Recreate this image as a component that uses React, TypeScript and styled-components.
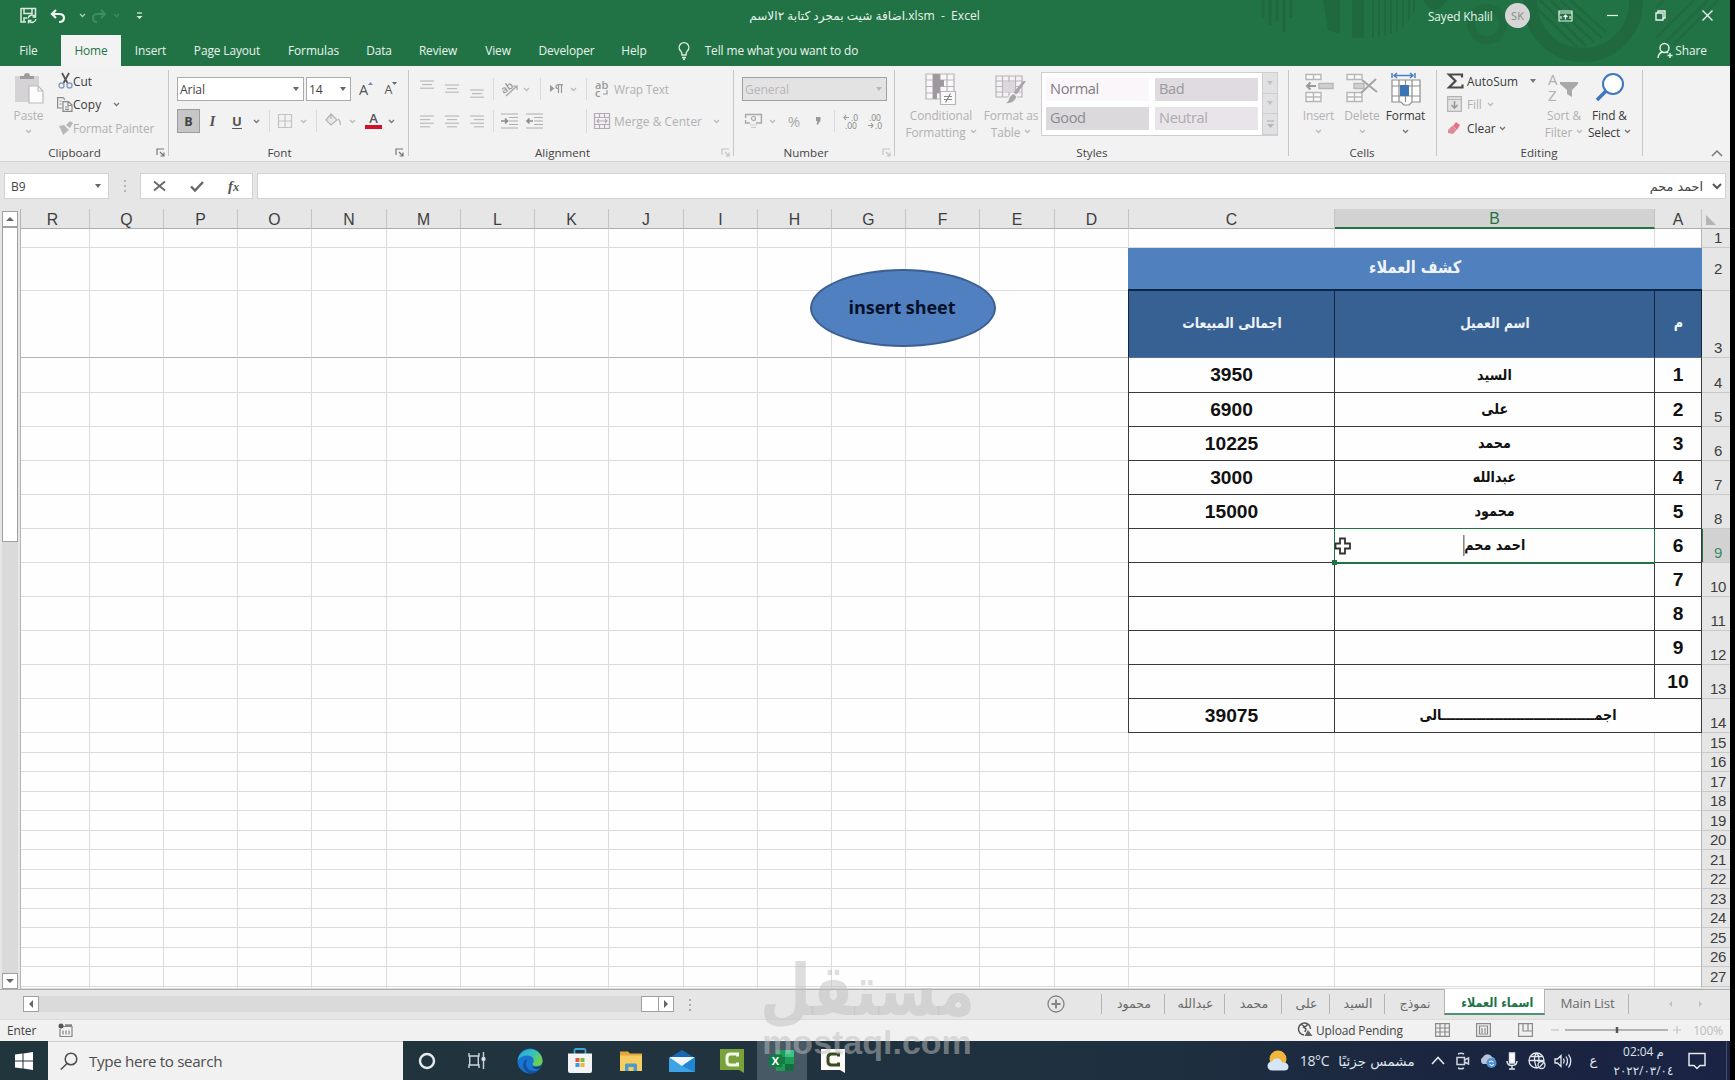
import React from 'react';
import styled, { createGlobalStyle, css } from 'styled-components';

const UI = `'Open Sans', 'Noto Sans', 'DejaVu Sans', sans-serif`;
const SHEET = `'Liberation Sans', 'DejaVu Sans', sans-serif`;
const ARABIC = `'DejaVu Sans', sans-serif`;
const GREEN = '#217346';

const Global = createGlobalStyle`
  * { box-sizing: border-box; }
  body { margin: 0; background: #000; overflow: hidden; }
  svg { overflow: visible; flex: none; }
`;

const Screen = styled.div`
  width: 1735px;
  height: 1080px;
  background: #000;
  padding-right: 5px;
  font-family: ${UI};
  font-size: 12px;
  color: #444;
  position: relative;
  overflow: hidden;
  white-space: nowrap;
`;
const Window = styled.div`
  width: 1730px;
  height: 1080px;
  display: flex;
  flex-direction: column;
  background: #e6e6e6;
`;
const Slot = styled.div<{ $w: number; $align?: string }>`
  width: ${p => p.$w}px;
  flex: none;
  display: flex;
  align-items: center;
  justify-content: ${p => p.$align || 'center'};
`;

/* ---------- title bar ---------- */
const Top = styled.header`
  height: 66px;
  flex: none;
  background: ${GREEN};
  color: #e9f3ec;
  position: relative;
  display: flex;
  flex-direction: column;
`;
const Ornament = styled.svg`
  position: absolute;
  right: 0;
  top: 0;
  overflow: hidden;
`;
const TitleRow = styled.div`
  height: 35px;
  display: flex;
  position: relative;
  padding-bottom: 4px;
`;
const Title = styled.div`
  width: 231px;
  margin-left: 593px;
  display: flex;
  align-items: center;
  justify-content: center;
  font-size: 12.1px;
  white-space: pre;
`;
const FileName = styled.span`
  font-family: ${UI};
  font-size: 12.1px;
`;
const Account = styled.div`
  width: 66px;
  margin-left: 448px;
  display: flex;
  align-items: center;
  font-size: 11.8px;
  letter-spacing: -0.1px;
`;
const Avatar = styled.div`
  width: 25px;
  height: 25px;
  margin: 3px 0 0 11px;
  border-radius: 50%;
  background: #d6d6d6;
  color: #8a8a8a;
  display: grid;
  place-items: center;
  font-size: 11px;
`;
const TabRow = styled.nav`
  height: 31px;
  display: flex;
  position: relative;
`;
const RibbonTab = styled.div<{ $w: number; $active?: boolean }>`
  width: ${p => p.$w}px;
  display: flex;
  align-items: center;
  justify-content: center;
  font-size: 11.9px;
  letter-spacing: -0.1px;
  padding-bottom: 2px;
  ${p => p.$active && css`
    background: #f3f3f3;
    color: ${GREEN};
  `}
`;

/* ---------- ribbon ---------- */
const Ribbon = styled.section`
  height: 96px;
  flex: none;
  display: flex;
  background: #f2f2f2;
  border-bottom: 1px solid #d4d4d4;
`;
const Group = styled.div<{ $w: number }>`
  width: ${p => p.$w}px;
  flex: none;
  display: flex;
  flex-direction: column;
  background: linear-gradient(#c6c6c6, #c6c6c6) right 4px / 1px 86px no-repeat;
`;
const GroupBody = styled.div<{ $pl?: number }>`
  height: 78px;
  display: flex;
  padding-left: ${p => p.$pl || 0}px;
`;
const GroupFoot = styled.div`
  height: 17px;
  display: flex;
  align-items: center;
`;
const GroupLabel = styled.div<{ $pr?: number }>`
  flex: 1;
  text-align: center;
  font-size: 11.6px;
  line-height: 17px;
  padding-right: ${p => p.$pr || 0}px;
`;
const Stack = styled.div<{ $w?: number; $pt?: number; $gap?: number }>`
  display: flex;
  flex-direction: column;
  flex: none;
  padding-top: ${p => p.$pt || 0}px;
  gap: ${p => p.$gap || 0}px;
  ${p => p.$w && css`width: ${p.$w}px;`}
`;
const ToolRow = styled.div<{ $h?: number }>`
  height: ${p => p.$h || 24}px;
  display: flex;
  align-items: center;
`;
const ToolText = styled.span<{ $off?: boolean; $w?: number; $ls?: number }>`
  color: ${p => (p.$off ? '#b3b0b3' : '#3b3b3b')};
  font-size: 11.9px;
  letter-spacing: ${p => p.$ls ?? -0.12}px;
  ${p => p.$w && css`width: ${p.$w}px;`}
`;
const BigButton = styled.div<{ $w: number; $off?: boolean }>`
  width: ${p => p.$w}px;
  flex: none;
  display: flex;
  flex-direction: column;
  align-items: center;
  padding-top: 6px;
  color: ${p => (p.$off ? '#b3b0b3' : '#3b3b3b')};
  font-size: 11.9px;
  letter-spacing: -0.1px;
  line-height: 16px;
`;
const BigIcon = styled.div`
  height: 35px;
`;
const BigLine = styled.div`
  height: 16.5px;
  display: flex;
  align-items: center;
  gap: 4px;
`;
const Combo = styled.div<{ $w: number; $off?: boolean }>`
  width: ${p => p.$w}px;
  height: 24px;
  flex: none;
  border: 1px solid ${p => (p.$off ? '#a0a0a0' : '#ababab')};
  background: ${p => (p.$off ? '#e4e3e4' : '#fff')};
  color: ${p => (p.$off ? '#b8b6b8' : '#444')};
  display: flex;
  align-items: center;
  justify-content: space-between;
  padding: 0 4px 0 2px;
  font-size: 12.2px;
  letter-spacing: -0.15px;
`;
const BoldButton = styled.div`
  width: 23px;
  height: 24px;
  background: #c6c6c6;
  border: 1px solid #9c9c9c;
  display: grid;
  place-items: center;
  font-weight: 700;
  font-size: 12.5px;
`;
const Glyph = styled.span<{ $italic?: boolean; $under?: boolean; $size?: number; $off?: boolean }>`
  font-weight: ${p => (p.$italic || p.$under ? 700 : 400)};
  font-style: ${p => (p.$italic ? 'italic' : 'normal')};
  font-family: ${p => (p.$italic ? `'Liberation Serif', serif` : UI)};
  text-decoration: ${p => (p.$under ? 'underline' : 'none')};
  text-underline-offset: 2px;
  font-size: ${p => p.$size || 13}px;
  color: ${p => (p.$off ? '#a9a9a9' : '#555')};
`;
const VRule = styled.i<{ $h?: number }>`
  width: 1px;
  height: ${p => p.$h || 22}px;
  background: #dadada;
`;
const Gallery = styled.div`
  width: 237px;
  height: 64px;
  margin-top: 6px;
  border: 1px solid #cfcdd0;
  background: #fff;
  display: flex;
`;
const GalleryGrid = styled.div`
  width: 220px;
  padding: 5px 0 0 4px;
  display: grid;
  grid-template-columns: 103px 103px;
  grid-auto-rows: 23px;
  gap: 6px 6px;
`;
const StyleCell = styled.div<{ $bg: string; $fg: string }>`
  background: ${p => p.$bg};
  color: ${p => p.$fg};
  font-size: 14.6px;
  letter-spacing: -0.35px;
  line-height: 20px;
  padding-left: 4px;
`;
const GalleryScroll = styled.div`
  flex: 1;
  display: grid;
  grid-template-rows: repeat(3, 1fr);
  > div {
    background: #e1e0e2;
    border-left: 1px solid #cfcdd0;
    border-bottom: 1px solid #cfcdd0;
    display: grid;
    place-items: center;
  }
`;
const RibbonEnd = styled.div`
  flex: 1;
  display: flex;
  justify-content: flex-end;
  align-items: flex-end;
  padding: 0 7px 4px 0;
`;

/* ---------- formula bar ---------- */
const FormulaBar = styled.div`
  height: 47px;
  flex: none;
  display: flex;
  padding: 11px 4px 10px 4px;
  background: #e6e6e6;
`;
const Box = styled.div<{ $w?: number; $ml?: number; $pl?: number }>`
  ${p => (p.$w ? css`width: ${p.$w}px; flex: none;` : css`flex: 1;`)}
  margin-left: ${p => p.$ml || 0}px;
  padding-left: ${p => p.$pl || 0}px;
  background: #fff;
  border: 1px solid #d2d2d2;
  display: flex;
  align-items: center;
  font-size: 12px;
`;
const FormulaText = styled.span`
  margin-left: auto;
  margin-right: 10px;
  font-family: ${ARABIC};
  font-size: 12.8px;
`;

/* ---------- sheet ---------- */
const SheetArea = styled.div`
  height: 781px;
  flex: none;
  display: flex;
  border-bottom: 1px solid #adadad;
`;
const VScroll = styled.div`
  width: 21px;
  flex: none;
  padding: 2px 0 0 2px;
  border-right: 1px solid #b5b5b5;
  display: flex;
  flex-direction: column;
`;
const ScrollButton = styled.div`
  width: 16px;
  height: 16px;
  flex: none;
  background: #fff;
  border: 1px solid #a0a0a0;
  display: grid;
  place-items: center;
`;
const VThumb = styled.div`
  width: 16px;
  height: 315px;
  background: #fff;
  border: 1px solid #a0a0a0;
`;
const VTrack = styled.div`
  width: 16px;
  flex: 1;
  background: #dadada;
`;

const COLS: [string, number][] = [
  ['R', 69], ['Q', 74], ['P', 74], ['O', 74], ['N', 75], ['M', 74], ['L', 74], ['K', 74], ['J', 75],
  ['I', 74], ['H', 74], ['G', 74], ['F', 74], ['E', 75], ['D', 74], ['C', 206], ['B', 320], ['A', 47],
];
const ROWS = [19, 43, 67, 35, 34, 34, 34, 34, 34, 34, 34, 34, 34, 34, 20, 19, 20, 19, 20, 19, 20, 19, 20, 19, 20, 19, 20];

const SheetGrid = styled.div`
  width: 1709px;
  display: grid;
  position: relative;
  grid-template-columns: ${COLS.map(c => c[1] + 'px').join(' ')} 28px;
  grid-template-rows: 20px ${ROWS.map(r => r + 'px').join(' ')} 1fr;
  font-family: ${SHEET};
`;
const ColHead = styled.div<{ $sel?: boolean; $clipped?: boolean }>`
  border-right: 1px solid #c3c3c3;
  border-bottom: ${p => (p.$sel ? `2px solid ${GREEN}` : '1px solid #adadad')};
  background: ${p => (p.$sel ? '#d2d2d2' : '#e6e6e6')};
  color: ${p => (p.$sel ? GREEN : '#3d3d3d')};
  display: flex;
  align-items: center;
  justify-content: center;
  font-size: 15.8px;
  line-height: 18px;
  padding: 2px ${p => (p.$clipped ? 5 : 0)}px 0 0;
`;
const Corner = styled.div`
  border-bottom: 1px solid #adadad;
  display: flex;
  align-items: flex-end;
  padding: 0 0 3px 4px;
`;
const RowHead = styled.div<{ $sel?: boolean; $mid?: boolean }>`
  grid-column: 19;
  border-bottom: 1px solid #c9c9c9;
  border-left: ${p => (p.$sel ? `2px solid ${GREEN}` : '1px solid #b5b5b5')};
  margin-left: -1px;
  background: ${p => (p.$sel ? '#d2d2d2' : '#e6e6e6')};
  color: ${p => (p.$sel ? '#3a8a62' : '#3d3d3d')};
  display: flex;
  align-items: ${p => (p.$mid ? 'center' : 'flex-end')};
  justify-content: center;
  padding: 0 0 0 ${p => (p.$sel ? 3 : 4)}px;
  font-size: 15px;
  line-height: 18px;
  letter-spacing: -0.3px;
`;
const Empty = styled.div<{ $freeze?: boolean }>`
  background: #fefefe;
  border-right: 1px solid #dcdcdc;
  border-bottom: 1px solid ${p => (p.$freeze ? '#b4b4b4' : '#dcdcdc')};
`;
const Cell = styled.div<{ $kind?: 'title' | 'head' | 'body'; $first?: boolean; $ar?: boolean }>`
  display: flex;
  align-items: center;
  justify-content: center;
  font-weight: 700;
  font-size: ${p => (p.$ar ? 15 : 19.2)}px;
  font-family: ${p => (p.$ar ? ARABIC : SHEET)};
  color: #111;
  background: #fefefe;
  border-right: 1px solid #3a3a3a;
  border-bottom: 1px solid #3a3a3a;
  ${p => p.$ar && css`padding-bottom: 1px;`}
  ${p => p.$first && css`
    border-left: 1px solid #3a3a3a;
    margin-left: -1px;
  `}
  ${p => p.$kind === 'title' && css`
    background: #5080bd;
    color: #eef3fa;
    border: 0;
    border-bottom: 2px solid #0d2747;
    font-size: 17px;
    padding-bottom: 4px;
  `}
  ${p => p.$kind === 'head' && css`
    background: #376193;
    color: #eef3fa;
    border-color: #16273d;
    border-bottom-color: #50709a;
    padding-bottom: 3px;
  `}
`;
const Narrow = styled.span<{ $x?: number }>`
  display: inline-flex;
  align-items: center;
  transform: scaleX(${p => p.$x || 0.85});
`;
const Selection = styled.div`
  grid-column: 17;
  grid-row: 10;
  margin: -1px 0 -1px -1px;
  border: 1px solid ${GREEN};
  border-bottom-width: 2px;
  z-index: 2;
  position: relative;
`;
const FillHandle = styled.i`
  position: absolute;
  left: -3px;
  bottom: -3px;
  width: 5px;
  height: 5px;
  background: ${GREEN};
`;
const Pointer = styled.svg`
  position: absolute;
  left: -1px;
  top: 8px;
`;
const Caret = styled.i`
  width: 1px;
  height: 21px;
  background: #222;
`;
const OvalButton = styled.div`
  position: absolute;
  left: 789px;
  top: 60px;
  width: 186px;
  height: 78px;
  border-radius: 50%;
  background: #5080bf;
  border: 2px solid #3b5f90;
  color: #04102a;
  font-family: 'Open Sans', sans-serif;
  font-weight: 700;
  font-size: 18px;
  letter-spacing: -0.05px;
  display: flex;
  align-items: center;
  justify-content: center;
  padding: 0 2px 3px 0;
`;

/* ---------- sheet tabs ---------- */
const TabsBar = styled.div`
  height: 29px;
  flex: none;
  display: flex;
  padding-left: 23px;
  background: #e6e6e6;
`;
const HScroll = styled.div`
  width: 651px;
  display: flex;
  padding-top: 6px;
`;
const HTrack = styled.div`
  flex: 1;
  height: 16px;
  background: #dadada;
`;
const HThumb = styled(ScrollButton)`
  width: 18px;
  margin-right: -1px;
`;
const Plus = styled.div`
  width: 54px;
  margin-left: 341px;
  padding-top: 5px;
`;
const SheetTab = styled.div<{ $w: number; $active?: boolean; $latin?: boolean; $plain?: boolean }>`
  width: ${p => p.$w}px;
  flex: none;
  display: flex;
  align-items: center;
  justify-content: center;
  font-family: ${p => (p.$latin ? UI : ARABIC)};
  font-size: ${p => (p.$latin ? 13.4 : 12.5)}px;
  letter-spacing: ${p => (p.$latin ? -0.25 : 0)}px;
  padding: 0 0 ${p => (p.$latin ? 4 : 2)}px 1px;
  color: #6a6a6a;
  background: ${p => (p.$plain ? 'none' : 'linear-gradient(#b4b4b4, #b4b4b4) right 4px / 1px 20px no-repeat')};
  ${p => p.$active && css`
    background: #fff;
    color: ${GREEN};
    font-weight: 700;
    font-size: 12.8px;
    height: 26px;
    margin-top: -1px;
    padding: 3px 0 0 6px;
    border: 1px solid #b4b4b4;
    border-top: 0;
    border-bottom: 2px solid #4c9371;
  `}
`;
const TabNav = styled.div`
  margin-left: 39px;
  display: flex;
  gap: 25px;
  padding-top: 10px;
`;

/* ---------- status bar ---------- */
const Status = styled.div`
  height: 22px;
  flex: none;
  display: flex;
  align-items: center;
  padding: 0 6px 2px 7px;
  background: #f1f1f1;
  border-top: 1px solid #dcdcdc;
  font-size: 11.9px;
  letter-spacing: -0.1px;
`;
const Faded = styled.span`
  color: #bcbcbc;
`;

/* ---------- task bar ---------- */
const Taskbar = styled.footer`
  flex: 1;
  display: flex;
  background: linear-gradient(90deg, #21353d 0%, #20333f 45%, #1e2f3f 68%, #1a2540 85%, #1a2344 100%);
  color: #dfe4ea;
`;
const Search = styled.div`
  width: 355px;
  height: 39px;
  background: #f1f1f1;
  border-top: 1px solid #cfcfcf;
  display: flex;
  align-items: center;
  gap: 11px;
  padding-left: 12px;
  color: #4d4d4d;
  font-size: 15.2px;
  letter-spacing: -0.35px;
`;
const TaskItem = styled.div<{ $w: number; $on?: boolean }>`
  width: ${p => p.$w}px;
  display: flex;
  align-items: center;
  justify-content: center;
  background: ${p => (p.$on ? '#465964' : 'transparent')};
`;
const Tray = styled.div`
  margin-left: auto;
  display: flex;
`;
const TrayText = styled.div<{ $w: number; $size?: number; $ar?: boolean; $pl?: number }>`
  width: ${p => p.$w}px;
  padding: 0 0 0 ${p => p.$pl || 0}px;
  display: flex;
  align-items: center;
  justify-content: center;
  font-size: ${p => p.$size || 14}px;
  font-family: ${p => (p.$ar ? ARABIC : UI)};
  letter-spacing: ${p => (p.$ar ? 0 : -0.3)}px;
`;
const Clock = styled.div`
  width: 66px;
  display: flex;
  flex-direction: column;
  align-items: center;
  justify-content: space-between;
  padding: 1px 0 0 3px;
  font-size: 11.9px;
  letter-spacing: -0.3px;
  line-height: 19px;
`;
const ShowDesktop = styled.div`
  width: 4px;
  border-left: 1px solid #46506b;
`;

/* ---------- watermark ---------- */
const Watermark = styled.div`
  position: absolute;
  left: 762px;
  top: 948px;
  width: 210px;
  color: rgba(190, 190, 190, 0.5);
  display: flex;
  flex-direction: column;
  align-items: center;
`;
const MarkArabic = styled.div`
  font-family: ${ARABIC};
  font-weight: 700;
  font-size: 56px;
  line-height: 76px;
  height: 76px;
  transform: scale(1.05, 1.28);
  transform-origin: 50% 26%;
`;
const MarkLatin = styled.div`
  font-family: 'Liberation Sans', sans-serif;
  font-weight: 700;
  font-size: 34px;
  line-height: 36px;
`;

/* ---------- icons ---------- */
type IconProps = { w: number; h?: number; c?: string; sw?: number; children: React.ReactNode };
const Svg = styled.svg`
  display: block;
`;
const Icon = ({ w, h, c = '#777', sw = 1.2, children }: IconProps) => (
  <Svg width={w} height={h || w} viewBox={`0 0 ${w} ${h || w}`} fill="none" stroke={c} strokeWidth={sw}>
    {children}
  </Svg>
);
const Chevron = ({ c = '#777' }: { c?: string }) => (
  <Icon w={7} h={5} c={c} sw={1.3}><path d="M1 1l2.5 2.5L6 1" /></Icon>
);
const Caret7 = ({ c = '#666' }: { c?: string }) => (
  <Icon w={6} h={4} c="none"><path d="M0 0h6L3 4z" fill={c} /></Icon>
);
const Launcher = ({ off, end }: { off?: boolean; end?: boolean }) => (
  <Slot $w={end ? 13 : 14} $align="flex-start">
    <Icon w={9} c={off ? '#c4c4c4' : '#777'}><path d="M1 7V1h7M4 4l4 4M8 4.5V8H4.5" /></Icon>
  </Slot>
);
const Lines = ({ kind, y = 0 }: { kind: 'left' | 'center' | 'right'; y?: number }) => {
  const long = 14, short = 10;
  const x = kind === 'left' ? 0 : kind === 'center' ? 2 : 4;
  const n = y ? 3 : 4;
  return (
    <Icon w={15} h={24} c="#b9b7b9" sw={1.1}>
      {Array.from({ length: n }, (_, i) => {
        const s = i % 2 ? short : long;
        const yy = (y || 7) + i * 3.6;
        return <path key={i} d={`M${i % 2 ? x : 0} ${yy}h${s}`} />;
      })}
    </Icon>
  );
};
const Indent = ({ out }: { out?: boolean }) => (
  <Icon w={17} h={16} c="#b0aeb0">
    <path d="M0 1h17M8 4.5h9M8 8h9M8 11.5h9M0 15h17" />
    <path d={out ? 'M1 8h6M3.5 5.500L1 8l2.500 2.500' : 'M0 8h6M4 5.500L6.500 8 4 10.500'} stroke="#8b8b8b" strokeWidth="1.6" />
  </Icon>
);
const ScrollArrow = ({ d }: { d: string }) => <Icon w={8} c="none"><path d={d} fill="#666" /></Icon>;
const Camtasia = ({ bg, fg }: { bg: string; fg: string }) => (
  <svg width="26" height="26" viewBox="0 0 26 26">
    <path d="M1 1h24v24l-5-3H1z" fill={bg} />
    <path d="M18.500 8.500V6h-7q-3.500 0-3.500 3.500v4q0 3.500 3.500 3.500h7v-2.500" fill="none" stroke={fg} strokeWidth="3" />
  </svg>
);

const NAMES = ['السيد', 'على', 'محمد', 'عبدالله', 'محمود', 'احمد محم', '', '', '', ''];
const SALES = ['3950', '6900', '10225', '3000', '15000', '', '', '', '', ''];
const TOTAL = 'اجم' + 'ـ'.repeat(35) + 'الى';

const place = (row: number, col: number, span = 1): React.CSSProperties => ({
  gridRow: row + 1,
  gridColumn: `${col} / span ${span}`,
});

const TopBar = () => (
  <Top>
    <Ornament width="490" height="66" viewBox="1240 0 490 66" fill="none" stroke="#20693f" strokeWidth="5">
      <path d="M1263 0v18M1270 0v25M1277 0v21M1284 0v32M1291 0v18" strokeWidth="3" />
      <path d="M1323 0l5 30 12 4V0zM1352 0v38h12V0zM1423 0q12 20 24 0z" fill="#20693f" stroke="none" />
      <path d="M1373 0v38M1379 0v37M1385 0v36M1391 0v34M1397 0v31M1403 0v27M1409 0v20M1414 0v12" strokeWidth="2" />
      <circle cx="1487" cy="24" r="16" strokeWidth="8" opacity=".8" />
      <circle cx="1583" cy="2" r="53" strokeWidth="14" />
      <path d="M1540 0l46 46M1550 0l44 42M1560 0l42 38M1570 0l36 32M1532 4l46 44" strokeWidth="2.500" />
      <path d="M1665 43l43-43M1674 44l44-44M1656 38l38-38M1656 8l8-8" strokeWidth="3" opacity=".8" />
    </Ornament>
    <TitleRow>
      <Slot $w={20} />
      <Slot $w={17}>
        <Icon w={17} c="#dcebe1" sw={1.5}><path d="M1 1.500h14.500v6M1 1v14h5M4 2v4.500h8V2M4 15v-4h3" /><path d="M8 11.500a4 4 0 0 1 7-2M16 12a4 4 0 0 1-7 2M15.500 7v3h-3M8.500 16.500v-3h3" strokeWidth="1.400" /></Icon>
      </Slot>
      <Slot $w={42}><Icon w={16} h={14} c="#f2f8f4" sw={2.2}><path d="M6 1L2 5l4 4M2 5h7q5 0 5 4t-5 4" /></Icon></Slot>
      <Slot $w={8} $align="flex-start"><Chevron c="#a9cdb7" /></Slot>
      <Slot $w={23}><Icon w={16} h={14} c="#418c60" sw={2}><path d="M10 1l4 4-4 4M14 5H7q-5 0-5 4t4 4" /></Icon></Slot>
      <Slot $w={12}><Chevron c="#418c60" /></Slot>
      <Slot $w={34}><Icon w={7} h={8} c="#dcebe1"><path d="M1 1h5" /><path d="M.5 4h6L3.500 7z" fill="#dcebe1" stroke="none" /></Icon></Slot>
      <Title><FileName>اضافة شيت بمجرد كتابة ٢الاسم.xlsm</FileName>{'  -  Excel'}</Title>
      <Account>Sayed Khalil</Account>
      <Avatar>SK</Avatar>
      <Slot $w={70}><Icon w={15} h={12} c="#e9f3ec"><path d="M1 1h13v10H1zM1 3h13M7.500 9.500V5M5.500 7l2-2 2 2M3 6v3M12 6v3" /></Icon></Slot>
      <Slot $w={25}><Icon w={11} h={3} c="#e9f3ec"><path d="M0 1.500h11" /></Icon></Slot>
      <Slot $w={70}><Icon w={11} c="#e9f3ec" sw={1.4}><path d="M1 3h7v7H1zM3 3V1h7v7H8" /></Icon></Slot>
      <Slot $w={25}><Icon w={11} c="#e9f3ec" sw={1.4}><path d="M.500.500l10 10M10.500.500l-10 10" /></Icon></Slot>
    </TitleRow>
    <TabRow>
      <RibbonTab $w={57}>File</RibbonTab>
      <Slot $w={4} />
      <RibbonTab $w={60} $active>Home</RibbonTab>
      <RibbonTab $w={59}>Insert</RibbonTab>
      <RibbonTab $w={94}>Page Layout</RibbonTab>
      <RibbonTab $w={79}>Formulas</RibbonTab>
      <RibbonTab $w={52}>Data</RibbonTab>
      <RibbonTab $w={66}>Review</RibbonTab>
      <RibbonTab $w={54}>View</RibbonTab>
      <RibbonTab $w={83}>Developer</RibbonTab>
      <RibbonTab $w={52}>Help</RibbonTab>
      <Slot $w={48}><Icon w={12} h={18} c="#dcebe1" sw={1.4}><path d="M4 13q0-3-1.500-4.200A4.800 4.800 0 1 1 9.500 8.800Q8 10 8 13zM4 15.500h4M5 17.300h2" /></Icon></Slot>
      <RibbonTab $w={147}>Tell me what you want to do</RibbonTab>
      <Slot $w={794} />
      <Slot $w={32}><Icon w={16} h={17} c="#e9f3ec" sw={1.4}><circle cx="7.500" cy="6" r="4.500" /><path d="M1 16q.5-5 4.500-6M9.500 10q1 .5 1.500 1M13 11v5M10.500 13.500h5" /></Icon></Slot>
      <RibbonTab $w={20}>Share</RibbonTab>
    </TabRow>
  </Top>
);

const MainRibbon = () => (
  <Ribbon>
    <Group $w={169}>
      <GroupBody>
        <BigButton $w={57} $off>
          <BigIcon>
            <Icon w={30} h={32} c="none"><path d="M1 4h24v26H1z" fill="#d5d3d6" /><path d="M6 7V4h4q0-3 3-3t3 3h4v3z" fill="#9e9ca0" /><path d="M15 14h9l5 5v12H15z" fill="#fcfcfc" stroke="#bbb" /><path d="M24 14v5h5" stroke="#bbb" /></Icon>
          </BigIcon>
          <BigLine>Paste</BigLine>
          <BigLine><Chevron c="#bbb" /></BigLine>
        </BigButton>
        <Stack $pt={3}>
          <ToolRow $h={23}>
            <Slot $w={16}><Icon w={15} h={16} c="#555" sw={1.800}><path d="M4 0l5.500 10M11 0L5.500 10" /><circle cx="3.500" cy="12.500" r="2.500" stroke="#8a9cc0" strokeWidth="1.400" /><circle cx="11.500" cy="12.500" r="2.500" stroke="#8a9cc0" strokeWidth="1.400" /></Icon></Slot>
            <ToolText $ls={0}>Cut</ToolText>
          </ToolRow>
          <ToolRow $h={24}>
            <Slot $w={16}><Icon w={16} h={15} c="#888"><path d="M5 11H.6V.600h5.400l2 2M6 4.600h5.500l3.500 3.500v6.300H6zM11 5v3.500h4M8 10h4M8 12.400h4M2.500 4h2M2.500 7h2" /></Icon></Slot>
            <ToolText $w={40} $ls={0.1}>Copy</ToolText>
            <Chevron />
          </ToolRow>
          <ToolRow $h={23}>
            <Slot $w={16}><Icon w={15} h={14} c="none"><path d="M8 4l4-4 3 2-3 5zM1 5l5-1 5 5-6 5-1-3z" fill="#b9b7b9" /></Icon></Slot>
            <ToolText $off>Format Painter</ToolText>
          </ToolRow>
        </Stack>
      </GroupBody>
      <GroupFoot><GroupLabel $pr={7}>Clipboard</GroupLabel><Launcher end /></GroupFoot>
    </Group>

    <Group $w={240}>
      <GroupBody $pl={8}>
        <Stack $pt={11} $gap={8}>
          <ToolRow>
            <Combo $w={127}>Arial<Caret7 /></Combo>
            <Slot $w={2} />
            <Combo $w={45}>14<Caret7 /></Combo>
            <Slot $w={30}><Glyph $size={14.5}>A</Glyph><Icon w={5} h={12} c="none"><path d="M0 2h5L2.500 -1z" fill="#6f8cc0" /></Icon></Slot>
            <Slot $w={20}><Glyph $size={12.5}>A</Glyph><Icon w={5} h={14} c="none"><path d="M0 0h5L2.500 3z" fill="#666" /></Icon></Slot>
          </ToolRow>
          <ToolRow>
            <BoldButton>B</BoldButton>
            <Slot $w={25}><Glyph $italic $size={15}>I</Glyph></Slot>
            <Slot $w={24}><Glyph $under>U</Glyph></Slot>
            <Slot $w={14}><Chevron /></Slot>
            <Slot $w={13}><VRule /></Slot>
            <Slot $w={18}><Icon w={14} c="#c3c1c3"><path d="M.5.500h13v13H.500zM7 0v14M0 7h14" /></Icon></Slot>
            <Slot $w={19}><Chevron c="#bbb" /></Slot>
            <Slot $w={7}><VRule /></Slot>
            <Slot $w={26}><Icon w={18} h={16} c="#b5b3b5"><path d="M7 1l6 6-6 5-5-5zM7 1v5" fill="#e9e8e9" /><path d="M14 6q3 2 2 6" /></Icon></Slot>
            <Slot $w={12}><Chevron c="#bbb" /></Slot>
            <Slot $w={30}>
              <Icon w={17} h={18} c="none"><text x="8.500" y="11" textAnchor="middle" fontSize="13" fontWeight="600" fill="#555">A</text><path d="M0 13h17v4H0z" fill="#d0112b" /></Icon>
            </Slot>
            <Slot $w={6}><Chevron /></Slot>
          </ToolRow>
        </Stack>
      </GroupBody>
      <GroupFoot><GroupLabel $pr={5}>Font</GroupLabel><Launcher /></GroupFoot>
    </Group>

    <Group $w={325}>
      <GroupBody $pl={6}>
        <Stack $pt={11} $gap={8}>
          <ToolRow>
            <Slot $w={25}><Lines kind="center" y={4} /></Slot>
            <Slot $w={25}><Lines kind="center" y={8} /></Slot>
            <Slot $w={25}><Lines kind="center" y={13} /></Slot>
            <Slot $w={7}><VRule /></Slot>
            <Slot $w={25}><Icon w={18} h={16} c="#a3a3a3"><text x="1" y="10" fontSize="10.500" fontWeight="600" fill="#9a9a9a" stroke="none" transform="rotate(-35 7 9)">ab</text><path d="M5 15L16 5M12 5h4v4" /></Icon></Slot>
            <Slot $w={9}><Chevron c="#bbb" /></Slot>
            <Slot $w={18}><VRule /></Slot>
            <Slot $w={14}><Icon w={13} h={10} c="#999"><path d="M0 1l4.500 3.500L0 8z" fill="#999" stroke="none" /><path d="M8.500 0v9M11.500 0v9M13 .6H8a2 2 0 0 0 0 4" /></Icon></Slot>
            <Slot $w={20}><Chevron c="#bbb" /></Slot>
            <Slot $w={7}><VRule /></Slot>
            <Slot $w={24}><Icon w={14} h={17} c="none"><text x="0" y="8" fontSize="11" fontWeight="600" fill="#999">ab</text><text x="0" y="16" fontSize="11" fontWeight="600" fill="#999">c</text><path d="M12 9v4H8" stroke="#999" /></Icon></Slot>
            <ToolText $off $ls={-0.2}>Wrap Text</ToolText>
          </ToolRow>
          <ToolRow>
            <Slot $w={25}><Lines kind="left" /></Slot>
            <Slot $w={25}><Lines kind="center" /></Slot>
            <Slot $w={25}><Lines kind="right" /></Slot>
            <Slot $w={7}><VRule /></Slot>
            <Slot $w={24}><Indent /></Slot>
            <Slot $w={26}><Indent out /></Slot>
            <Slot $w={36} />
            <Slot $w={7}><VRule $h={24} /></Slot>
            <Slot $w={24}><Icon w={16} c="#b5a9b8"><path d="M.5.500h15v15H.500zM0 4.500h16M0 11.500h16M5.500 0v4.500M10.500 0v4.500M5.500 11.500V16M10.500 11.500V16M3 8h10M5 6L3 8l2 2M11 6l2 2-2 2" /></Icon></Slot>
            <ToolText $off $w={99} $ls={0.04}>Merge &amp; Center</ToolText>
            <Chevron c="#bbb" />
          </ToolRow>
        </Stack>
      </GroupBody>
      <GroupFoot><GroupLabel $pr={5}>Alignment</GroupLabel><Launcher off end /></GroupFoot>
    </Group>

    <Group $w={161}>
      <GroupBody $pl={8}>
        <Stack $pt={11} $gap={8}>
          <ToolRow><Combo $w={145} $off>General<Caret7 c="#b9b9b9" /></Combo></ToolRow>
          <ToolRow>
            <Slot $w={23}><Icon w={17} h={16} c="#a9a9a9"><path d="M.6 5V1.600h15.800V10H11M.6 7v3H5" strokeWidth="1.500" /><circle cx="8.500" cy="5.500" r="2" /><path d="M5 12h7M6 14.500h5" stroke="#ccc" /></Icon></Slot>
            <Slot $w={15}><Chevron c="#bbb" /></Slot>
            <Slot $w={28}><Glyph $off $size={15}>%</Glyph></Slot>
            <Slot $w={20}><Icon w={5} h={8} c="none"><path d="M0 0h4.500v3.500L2 7.500H.500L1.500 4H0z" fill="#999" /></Icon></Slot>
            <Slot $w={13}><VRule /></Slot>
            <Slot $w={19}><Icon w={16} h={15} c="#999"><path d="M6 3.500H1M3 1L1 3.500 3 6" /><text x="8" y="7" fontSize="8.500" fill="#858585" stroke="none">.0</text><text x="2" y="15" fontSize="8.500" fill="#858585" stroke="none">.00</text></Icon></Slot>
            <Slot $w={29}><Icon w={16} h={15} c="#999"><path d="M1 11.500h5M4 9l2 2.500L4 14" /><text x="2" y="7" fontSize="8.500" fill="#858585" stroke="none">.00</text><text x="8" y="15" fontSize="8.500" fill="#858585" stroke="none">.0</text></Icon></Slot>
          </ToolRow>
        </Stack>
      </GroupBody>
      <GroupFoot><GroupLabel $pr={4}>Number</GroupLabel><Launcher off end /></GroupFoot>
    </Group>

    <Group $w={394}>
      <GroupBody $pl={6}>
        <BigButton $w={80} $off>
          <BigIcon>
            <Icon w={32} h={33} c="#b7b3b8"><path d="M1 2h28v25H1zM1 8h28M1 14.500h28M1 21h28M8 2v25M22 2v25M15 2v25" fill="#faf8fa" /><path d="M8 2h7v6h4v6.500h-4V21h-3v6H8z" fill="#9d999e" stroke="none" /><path d="M15.500 19.500h15v13h-15z" fill="#fbfafb" /><path d="M19 24.500h8M19 27.500h8M25.500 21.500l-5 9" stroke="#888" /></Icon>
          </BigIcon>
          <BigLine>Conditional</BigLine>
          <BigLine>Formatting <Chevron c="#bbb" /></BigLine>
        </BigButton>
        <BigButton $w={60} $off>
          <BigIcon>
            <Icon w={32} h={33} c="#b7b3b8"><path d="M1 4h26v21H1zM1 9h26M1 14.500h26M1 20h26M7.500 4v21M14 4v21M20.500 4v21" fill="#f5f2f5" /><path d="M8 10h12v10H8z" fill="#dbd7dc" stroke="none" /><path d="M31 9l-9 13-4-1 10-12z" fill="#a9a6aa" stroke="none" /><path d="M18 21l4 3q-1 8-13 8 5-3 5-7z" fill="#a9a6aa" stroke="#f2f2f2" /></Icon>
          </BigIcon>
          <BigLine>Format as</BigLine>
          <BigLine>Table <Chevron c="#bbb" /></BigLine>
        </BigButton>
        <Gallery>
          <GalleryGrid>
            <StyleCell $bg="#faf6fa" $fg="#7f7c80">Normal</StyleCell>
            <StyleCell $bg="#dfdbe0" $fg="#9b979c">Bad</StyleCell>
            <StyleCell $bg="#dcd9dd" $fg="#8e8b90">Good</StyleCell>
            <StyleCell $bg="#e8e4e9" $fg="#aeaab0">Neutral</StyleCell>
          </GalleryGrid>
          <GalleryScroll>
            <div><Caret7 c="#c2c0c3" /></div>
            <div><Caret7 c="#c2c0c3" /></div>
            <div><Icon w={7} h={8} c="#b5b3b6"><path d="M0 1h7" /><path d="M0 4h7L3.500 8z" fill="#b5b3b6" stroke="none" /></Icon></div>
          </GalleryScroll>
        </Gallery>
      </GroupBody>
      <GroupFoot><GroupLabel>Styles</GroupLabel></GroupFoot>
    </Group>

    <Group $w={148}>
      <GroupBody $pl={8}>
        <BigButton $w={43} $off>
          <BigIcon><Icon w={30} h={32} c="#b7b7b7" sw={1.400}><path d="M2 2.500h15v5H2zM9.500 2.500v5M2 20.500h15v9H2zM9.500 20.500v9M2 25h15" fill="#fafafa" /><path d="M15 11.500h14v5H15z" fill="#d0d0d0" /><path d="M12 14H3M6.500 10.500L3 14l3.500 3.500" stroke="#999" strokeWidth="2" /></Icon></BigIcon>
          <BigLine>Insert</BigLine>
          <BigLine><Chevron c="#bbb" /></BigLine>
        </BigButton>
        <BigButton $w={44} $off>
          <BigIcon><Icon w={32} h={32} c="#b7b7b7" sw={1.400}><path d="M1 2.500h15v5H1zM8.500 2.500v5M1 20.500h15v9H1zM8.500 20.500v9M1 25h15" fill="#fafafa" /><path d="M8 11.500h10v5H8z" fill="#d0d0d0" /><path d="M16 8l15 12M30 7L15 21" stroke="#a5a5a5" strokeWidth="2" /></Icon></BigIcon>
          <BigLine>Delete</BigLine>
          <BigLine><Chevron c="#bbb" /></BigLine>
        </BigButton>
        <BigButton $w={43}>
          <BigIcon><Icon w={30} h={34} c="#8d8d8d"><path d="M1 8h28v22h-8l-3 3h-5l-3-3H1zM1 14h28M1 24h28M8 8v22M21 8v22M14.500 8v6M14.500 24v6" fill="#fff" /><path d="M9 13h9v11H9z" fill="#3b73b5" stroke="none" /><path d="M1 1v5M24 1v5M3 3.500h19M6 1L3 3.500 6 6M19 1l3 2.500L19 6" stroke="#4a7fc0" strokeWidth="1.500" /></Icon></BigIcon>
          <BigLine>Format</BigLine>
          <BigLine><Chevron /></BigLine>
        </BigButton>
      </GroupBody>
      <GroupFoot><GroupLabel $pr={2}>Cells</GroupLabel></GroupFoot>
    </Group>

    <Group $w={206}>
      <GroupBody $pl={10}>
        <Stack $w={92} $pt={3}>
          <ToolRow $h={23}>
            <Slot $w={20} $align="flex-start"><Icon w={17} h={16} c="#4a4a4a" sw={2.200}><path d="M15 4.500V1.500H2L8.500 8 2 14.500h13.500v-3" /></Icon></Slot>
            <ToolText $w={63} $ls={0}>AutoSum</ToolText>
            <Caret7 c="#777" />
          </ToolRow>
          <ToolRow $h={24}>
            <Slot $w={20} $align="flex-start"><Icon w={15} h={16} c="#b5b5b5"><path d="M.6.600h13.800v14.800H.600zM0 3.500h15" fill="#e3e3e3" /><path d="M7.500 5v7M4.500 9l3 3 3-3" stroke="#999" strokeWidth="1.600" /></Icon></Slot>
            <ToolText $off $w={20}>Fill</ToolText>
            <Chevron c="#bbb" />
          </ToolRow>
          <ToolRow $h={24}>
            <Slot $w={20} $align="flex-start"><Icon w={14} h={14} c="none"><path d="M9 1l4 3-3 5-4-4z" fill="#e8718a" /><path d="M5.500 4.500l4 4.500-3.500 4-5-1 0-3z" fill="#dd8a9b" /></Icon></Slot>
            <ToolText $w={32} $ls={0}>Clear</ToolText>
            <Chevron />
          </ToolRow>
        </Stack>
        <BigButton $w={50} $off>
          <BigIcon><Icon w={32} h={32} c="none"><text x="0" y="13" fontSize="15" fill="#b0b0b0">A</text><text x="0" y="29" fontSize="15" fill="#b0b0b0">Z</text><path d="M12 10h18v2l-6 6v7l-5-3v-4l-7-6z" fill="#a9a9a9" /></Icon></BigIcon>
          <BigLine>Sort &amp;</BigLine>
          <BigLine>Filter <Chevron c="#bbb" /></BigLine>
        </BigButton>
        <BigButton $w={41}>
          <BigIcon><Icon w={30} h={32} c="#3d77bd" sw={2}><circle cx="18" cy="12" r="10" fill="#fff" /><path d="M11 19L2 28" strokeWidth="3.600" /></Icon></BigIcon>
          <BigLine>Find &amp;</BigLine>
          <BigLine>Select <Chevron /></BigLine>
        </BigButton>
      </GroupBody>
      <GroupFoot><GroupLabel $pr={2}>Editing</GroupLabel></GroupFoot>
    </Group>
    <RibbonEnd><Icon w={12} h={7} c="#777" sw={1.500}><path d="M1 6l5-5 5 5" /></Icon></RibbonEnd>
  </Ribbon>
);

const Sheet = () => (
  <SheetArea>
    <VScroll>
      <ScrollButton><ScrollArrow d="M0 6l4-4 4 4z" /></ScrollButton>
      <VThumb />
      <VTrack />
      <ScrollButton><ScrollArrow d="M0 2l4 4 4-4z" /></ScrollButton>
    </VScroll>
    <SheetGrid>
      {COLS.map(([name], i) => <ColHead key={name} $sel={name === 'B'} $clipped={name === 'R'} style={place(0, i + 1)}>{name}</ColHead>)}
      <Corner style={place(0, 19)}><Icon w={10} c="none"><path d="M0 0v10h10z" fill="#b4b4b4" /></Icon></Corner>
      {ROWS.map((_, r) => {
        const row = r + 1;
        const inTable = row >= 2 && row <= 14;
        return COLS.slice(0, inTable ? 15 : 18).map(([name], c) => (
          <Empty key={name + row} $freeze={row === 3} style={place(row, c + 1)} />
        ));
      })}
      {COLS.map(([name], c) => <Empty key={'end' + name} style={place(28, c + 1)} />)}
      {ROWS.map((_, r) => <RowHead key={r} $sel={r === 8} $mid={r === 1} style={{ gridRow: r + 2 }}>{r + 1}</RowHead>)}

      <Cell $kind="title" $ar $first style={place(2, 16, 3)}><Narrow>كشف العملاء</Narrow></Cell>
      <Cell $kind="head" $ar $first style={place(3, 16)}><Narrow $x={0.83}>اجمالى المبيعات</Narrow></Cell>
      <Cell $kind="head" $ar style={place(3, 17)}><Narrow $x={0.81}>اسم العميل</Narrow></Cell>
      <Cell $kind="head" $ar style={place(3, 18)}><Narrow>م</Narrow></Cell>
      {NAMES.map((name, i) => (
        <React.Fragment key={i}>
          <Cell $first style={place(i + 4, 16)}>{SALES[i]}</Cell>
          <Cell $ar dir="rtl" style={place(i + 4, 17)}><Narrow>{name}{i === 5 && <Caret />}</Narrow></Cell>
          <Cell style={place(i + 4, 18)}>{i + 1}</Cell>
        </React.Fragment>
      ))}
      <Cell $first style={place(14, 16)}>39075</Cell>
      <Cell $ar style={place(14, 17, 2)}><Narrow>{TOTAL}</Narrow></Cell>
      <Selection>
        <FillHandle />
        <Pointer width="18" height="18" viewBox="0 0 18 18"><path d="M6 1.500h5v5h5v5h-5v5H6v-5H1.500v-5H6z" fill="#fff" stroke="#333" strokeWidth="1.800" /></Pointer>
      </Selection>
      <OvalButton>insert sheet</OvalButton>
    </SheetGrid>
  </SheetArea>
);

const Bottom = () => (
  <>
    <TabsBar>
      <HScroll>
        <ScrollButton><ScrollArrow d="M6 0L2 4l4 4z" /></ScrollButton>
        <HTrack />
        <HThumb />
        <ScrollButton><ScrollArrow d="M2 0l4 4-4 4z" /></ScrollButton>
      </HScroll>
      <Slot $w={32}><Icon w={3} h={12} c="none"><path d="M0 0h2v2H0zM0 5h2v2H0zM0 10h2v2H0z" fill="#aaa" /></Icon></Slot>
      <Plus><Icon w={18} c="#858585" sw={1.300}><circle cx="9" cy="9" r="8" /><path d="M9 4.500v9M4.500 9h9" strokeWidth="2" /></Icon></Plus>
      <SheetTab $w={1} />
      <SheetTab $w={63}>محمود</SheetTab>
      <SheetTab $w={60}>عبدالله</SheetTab>
      <SheetTab $w={57}>محمد</SheetTab>
      <SheetTab $w={48}>على</SheetTab>
      <SheetTab $w={55}>السيد</SheetTab>
      <SheetTab $w={59} $plain>نموذج</SheetTab>
      <SheetTab $w={101} $active><Narrow $x={0.87}>اسماء العملاء</Narrow></SheetTab>
      <SheetTab $w={84} $latin>Main List</SheetTab>
      <TabNav>
        <Icon w={5} h={8} c="none"><path d="M4 1v6L1 4z" fill="#c0c0c0" /></Icon>
        <Icon w={5} h={8} c="none"><path d="M1 1v6l3-3z" fill="#c0c0c0" /></Icon>
      </TabNav>
    </TabsBar>
    <Status>
      <Slot $w={51} $align="flex-start">Enter</Slot>
      <Icon w={15} h={14} c="#858585"><path d="M4 3.500h10v10H2V6M5 7.500v4M8 7.500v4M11 7.500v4" /><circle cx="3" cy="3" r="2.500" fill="#555" stroke="none" /><path d="M7 2.500h7" strokeWidth="2.500" /></Icon>
      <Slot $w={1225} />
      <Slot $w={18} $align="flex-start"><Icon w={15} h={15} c="#555" sw={1.500}><path d="M6 13A6 6 0 1 1 12.500 7M5 5l3 2-1 3M3 2l4 3 3-3" /><path d="M10 8l4.500 6h-8z" fill="#666" stroke="none" /></Icon></Slot>
      <Slot $w={113} $align="flex-start">Upload Pending</Slot>
      <Slot $w={26}><Icon w={15} h={14} c="#8a8a8a"><path d="M.6.600h13.800v12.800H.600zM0 5h15M0 9h15M5 0v14M10 0v14" /></Icon></Slot>
      <Slot $w={57}><Icon w={15} h={14} c="#8a8a8a"><path d="M.6.600h13.800v12.800H.600zM3.500 3h8v8h-8zM6 5v5M9 5v5" /></Icon></Slot>
      <Slot $w={26}><Icon w={15} h={14} c="#8a8a8a"><path d="M.6.600h13.800v12.800H.600zM5 .6V8H10V.6M10 8h4.500" /></Icon></Slot>
      <Slot $w={21} $align="flex-end"><Icon w={8} h={8} c="#c6c6c6"><path d="M0 4h8" /></Icon></Slot>
      <Slot $w={6} />
      <Icon w={103} h={8} c="#777"><path d="M0 4h103" /><path d="M52 1v6" strokeWidth="2.500" stroke="#555" /></Icon>
      <Slot $w={18}><Icon w={8} h={8} c="#c6c6c6"><path d="M0 4h8M4 0v8" /></Icon></Slot>
      <Slot $w={37} $align="flex-end"><Faded>100%</Faded></Slot>
    </Status>
    <Taskbar>
      <TaskItem $w={47}><Icon w={18} c="none"><path d="M0 2.500l7.500-1v7H0zM8.500 1.400L18 0v8.500H8.500zM0 9.500h7.500v7L0 15.500zM8.500 9.500H18V18l-9.500-1.400z" fill="#fff" /></Icon></TaskItem>
      <Slot $w={1} />
      <Search>
        <Icon w={18} c="#4d4d4d" sw={1.500}><circle cx="11" cy="7" r="5.800" /><path d="M7 11.500L.8 17.500" /></Icon>
        Type here to search
      </Search>
      <TaskItem $w={48}><Icon w={18} c="#e6ebee" sw={2.400}><circle cx="9" cy="9" r="7" /></Icon></TaskItem>
      <TaskItem $w={52}><Icon w={18} h={17} c="#cdd5d9" sw={1.400}><path d="M1 1v3h10V1M1 16v-3h10v3M1.700 4v9M10.300 4v9M15.500 0v5M15.500 9v8" /><circle cx="15.500" cy="7" r="1.500" fill="#fff" /></Icon></TaskItem>
      <TaskItem $w={53}>
        <svg width="26" height="26" viewBox="0 0 26 26">
          <defs><linearGradient id="edgeTop" x1="0" y1="0" x2="1" y2=".5"><stop offset="0" stopColor="#2aa6e0" /><stop offset=".6" stopColor="#36c4b8" /><stop offset="1" stopColor="#6fd04c" /></linearGradient></defs>
          <circle cx="13" cy="13" r="12.500" fill="#1874cf" />
          <path d="M1 12A12.300 12.300 0 0 1 25.500 13q0 5-6 5-4 0-4-2.500 2-1.500 1-4.500-1.500-3.500-6-3.500Q4 7.500 1 12z" fill="url(#edgeTop)" />
          <path d="M10 11q-4 9 5 12 5 1 8.500-3.500Q20 27 12 25 5 22 6.500 15q1-3 3.500-4z" fill="#134f9c" />
          <path d="M14.500 18.500q6 2 10-1.500l-1 2.500q-5 3-9-1z" fill="#20343d" />
        </svg>
      </TaskItem>
      <TaskItem $w={48}>
        <svg width="26" height="26" viewBox="0 0 26 26">
          <path d="M7.500 7V2.500q0-1.500 1.500-1.500h8q1.500 0 1.500 1.500V7" fill="none" stroke="#39a5d8" strokeWidth="1.800" />
          <path d="M1 5.500h24V23q0 2-2 2H3q-2 0-2-2z" fill="#f1f3f5" />
          <path d="M8.500 10h4v4h-4z" fill="#e2583a" /><path d="M13.500 10h4v4h-4z" fill="#7db83a" /><path d="M8.500 15h4v4h-4z" fill="#3f9be0" /><path d="M13.500 15h4v4h-4z" fill="#f2b632" />
        </svg>
      </TaskItem>
      <TaskItem $w={53}>
        <svg width="24" height="22" viewBox="0 0 24 22">
          <path d="M1 1.500h8l2 2h12V21H1z" fill="#e3a93c" /><path d="M1 5.500h22V21H1z" fill="#f6cd62" />
          <path d="M6 21v-6q0-1.500 1.500-1.500h9q1.500 0 1.500 1.500v6h-3.500v-4h-5v4z" fill="#4b9cc8" />
        </svg>
      </TaskItem>
      <TaskItem $w={50}>
        <svg width="26" height="24" viewBox="0 0 26 24">
          <path d="M0 9l13-8 13 8z" fill="#1767b4" /><path d="M1 8h24v15H1z" fill="#f0f6fb" /><path d="M0 8l13 9L26 8v15H0z" fill="#3ea3e6" /><path d="M13 17l13 6V8z" fill="#2186d2" />
        </svg>
      </TaskItem>
      <TaskItem $w={50}><Camtasia bg="#7aa23a" fg="#f4f8ea" /></TaskItem>
      <TaskItem $w={50} $on>
        <svg width="26" height="24" viewBox="0 0 26 24">
          <path d="M7 1h18v21H7z" fill="#1f9a58" /><path d="M16 1h9v7h-9z" fill="#35c481" /><path d="M7 8h9v7H7z" fill="#17794a" /><path d="M16 15h9v7h-9z" fill="#127040" />
          <path d="M0 6h13v12H0z" fill="#107c41" /><text x="6.500" y="16" textAnchor="middle" fontSize="11" fontWeight="700" fill="#fff">X</text>
        </svg>
      </TaskItem>
      <TaskItem $w={52}><Camtasia bg="#fbfcf8" fg="#3c4a24" /></TaskItem>
      <Tray>
        <TaskItem $w={34}>
          <svg width="24" height="22" viewBox="0 0 24 22"><circle cx="11" cy="9" r="8.500" fill="#f3b63c" /><path d="M5 20.500a4.500 4.500 0 0 1 0-9q1.500-3.500 5.500-3 3.500.3 4.500 4 6-.5 6.500 4 0 4-4 4z" fill="#d4e6f7" /></svg>
        </TaskItem>
        <TrayText $w={37}>18°C</TrayText>
        <TrayText $w={87} $ar $size={13.5}>مشمس جزئيًا</TrayText>
        <TaskItem $w={36}><Icon w={14} h={9} c="#e3e7ee" sw={1.600}><path d="M1 8l6-6.500L13 8" /></Icon></TaskItem>
        <TaskItem $w={14}><Icon w={14} h={18} c="#cfd5de" sw={1.500}><path d="M1 5.500h7.500v7H1zM8.500 8l4-2v6l-4-2M2 2q3-1.500 6 0M2 16q3 1.500 6 0" /></Icon></TaskItem>
        <TaskItem $w={36}><svg width="18" height="15" viewBox="0 0 18 15"><path d="M4 11a4 4 0 0 1 0-7 5 5 0 0 1 9 0q4 1 3 5l-2 2z" fill="#b5c3d6" /><circle cx="12.500" cy="10" r="5" fill="#4f91d0" /><path d="M10 9q2-2 4.500 0M15 11.500q-2 2-4.500 0" stroke="#fff" fill="none" /></svg></TaskItem>
        <TaskItem $w={12}><Icon w={12} h={18} c="#e3e7ee" sw={1.400}><path d="M3.500 1h5v10h-5z" fill="#fff" /><path d="M1 9q0 4.500 5 4.500T11 9M6 13.500V17M3 17h6" /></Icon></TaskItem>
        <TaskItem $w={38}><Icon w={18} c="#e3e7ee" sw={1.300}><circle cx="8.500" cy="8.500" r="7.500" /><path d="M1 8.500h15M8.500 1q-4 4 0 15M8.500 1q4 4 1.500 9M2.500 4.500h12" /><circle cx="13.500" cy="13" r="3.500" fill="#1a2540" /><path d="M11.500 15l4-4" /></Icon></TaskItem>
        <TaskItem $w={13}><Icon w={18} h={16} c="#e3e7ee" sw={1.300}><path d="M1 6h2.500L7 2.500v11L3.500 10H1zM9.500 5.500q1.500 2.500 0 5M12 3.500q3 4.500 0 9M14.500 1.500q4.500 6.500 0 13" /></Icon></TaskItem>
        <TrayText $w={40} $ar $size={13} $pl={9}>ع</TrayText>
        <Clock><span>02:04 م</span><span>٢٠٢٢/٠٣/٠٤</span></Clock>
        <TaskItem $w={44}><Icon w={18} h={18} c="#e3e7ee" sw={1.500}><path d="M1 1.500h16v12h-5l-3 3-3-3H1z" /></Icon></TaskItem>
        <Slot $w={7} />
        <ShowDesktop />
      </Tray>
    </Taskbar>
  </>
);

export default function App() {
  return (
    <Screen>
      <Global />
      <Window>
        <TopBar />
        <MainRibbon />
        <FormulaBar>
          <Box $w={105} $pl={6}>B9<Slot $w={75} $align="flex-end"><Caret7 /></Slot></Box>
          <Slot $w={31}><Icon w={2} h={12} c="none"><path d="M0 0h2v2H0zM0 5h2v2H0zM0 10h2v2H0z" fill="#b5b5b5" /></Icon></Slot>
          <Box $w={113}>
            <Slot $w={37}><Icon w={11} h={10} c="#666" sw={1.800}><path d="M0 .5l11 9M11 .5L0 9.500" /></Icon></Slot>
            <Slot $w={37}><Icon w={14} h={11} c="#666" sw={2.400}><path d="M1 5.500L5 9.500 13 1" /></Icon></Slot>
            <Slot $w={37}><Glyph $italic $size={15}>f<small>x</small></Glyph></Slot>
          </Box>
          <Box $ml={4}><FormulaText dir="rtl">احمد محم</FormulaText><Slot $w={12} $align="flex-start"><Icon w={8} h={7} c="#555" sw={2}><path d="M0 1l4 4 4-4" /></Icon></Slot></Box>
        </FormulaBar>
        <Sheet />
        <Bottom />
      </Window>
      <Watermark>
        <MarkArabic>مستقل</MarkArabic>
        <MarkLatin>mostaql.com</MarkLatin>
      </Watermark>
    </Screen>
  );
}
